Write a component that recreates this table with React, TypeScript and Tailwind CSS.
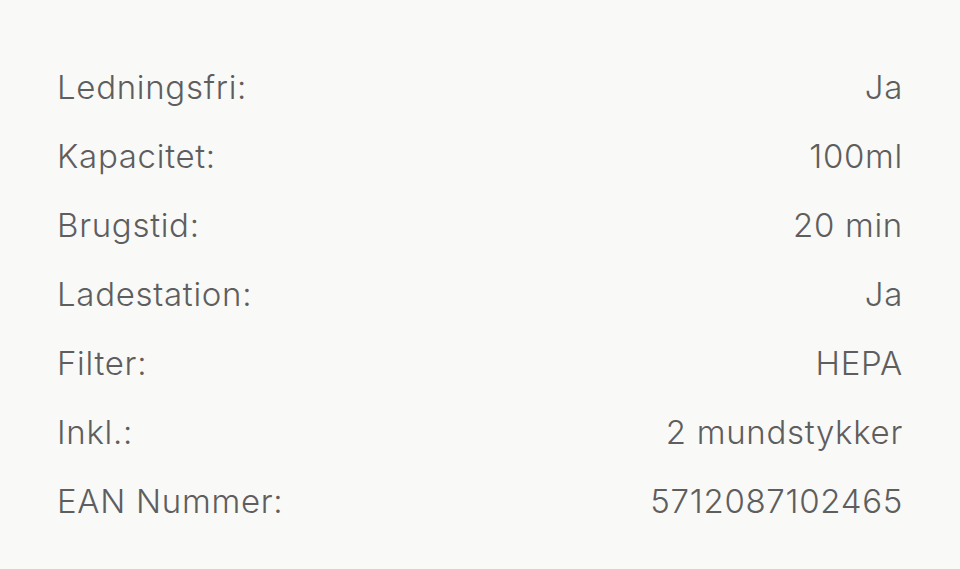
const specs: [string, string][] = [
  ['Ledningsfri:', 'Ja'],
  ['Kapacitet:', '100ml'],
  ['Brugstid:', '20 min'],
  ['Ladestation:', 'Ja'],
  ['Filter:', 'HEPA'],
  ['Inkl.:', '2 mundstykker'],
  ['EAN Nummer:', '5712087102465'],
];

export default function App() {
  return (
    <div className="min-h-[569px] w-full bg-[#f9f9f7] px-[57px] pt-[53px] font-['Inter','Lato',sans-serif] text-[33px] font-light tracking-[0.7px] text-[#5e5e5e]">
      {specs.map(([label, value]) => (
        <div key={label} className="flex h-[69px] items-center justify-between">
          <span>{label}</span>
          <span>{value}</span>
        </div>
      ))}
    </div>
  );
}
